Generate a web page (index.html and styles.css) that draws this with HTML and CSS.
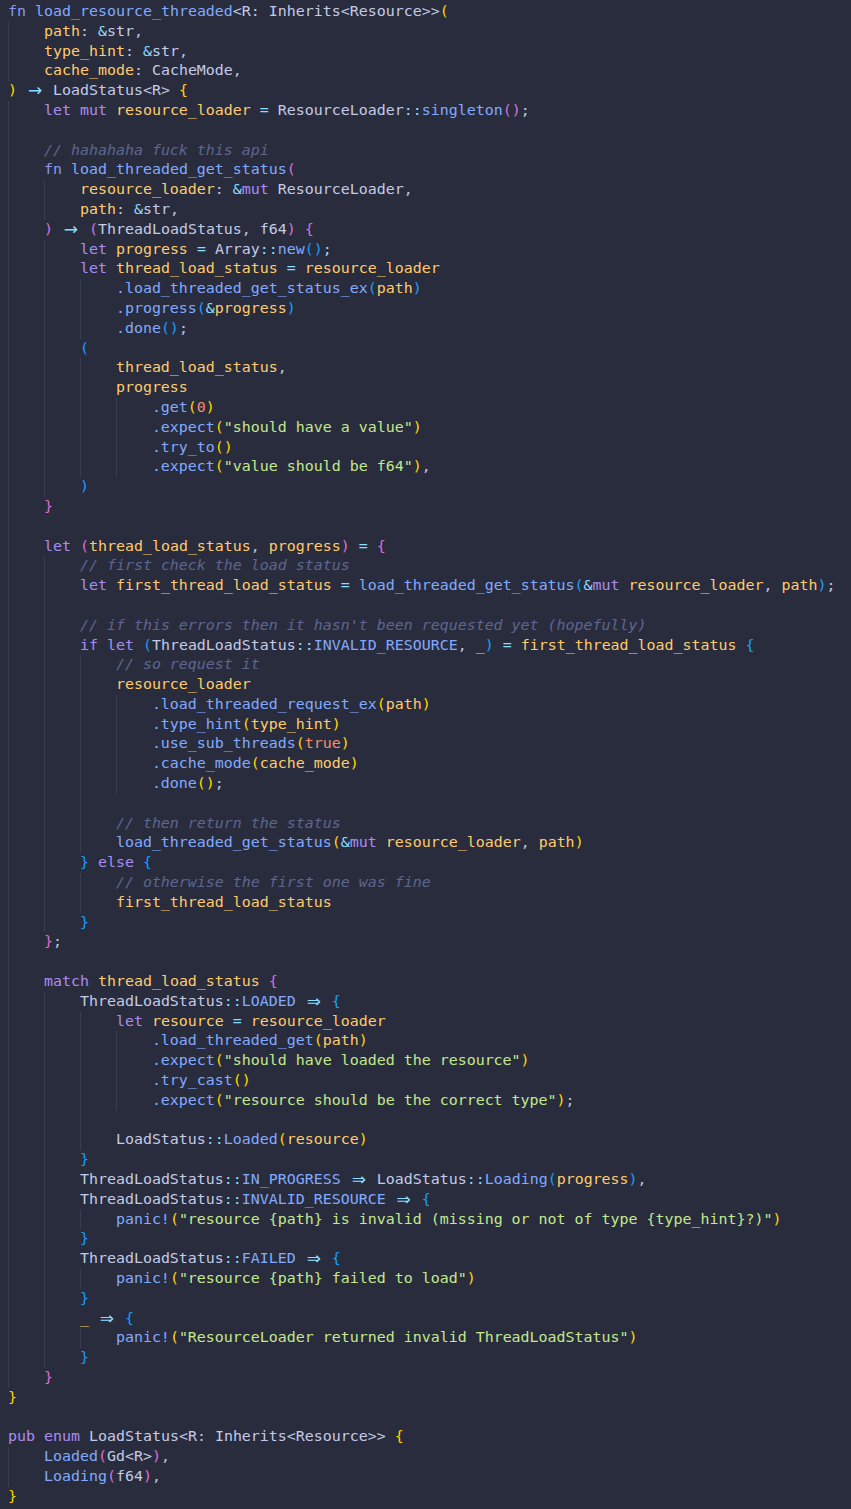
FILE: index.html
```html
<!DOCTYPE html>
<html>
<head>
    <title>load_resource_threaded</title>
    <link rel="stylesheet" href="styles.css">
</head>
<body>
<div class="code">
<div class="ln"><span class="fk">fn</span> <span class="f">load_resource_threaded</span>&lt;<span class="t">R</span>: <span class="t">Inherits</span>&lt;<span class="t">Resource</span>&gt;&gt;<span class="b1">(</span></div>
<div class="ln"><i></i><span class="v">path</span>: <span class="o">&amp;</span><span class="t">str</span>,</div>
<div class="ln"><i></i><span class="v">type_hint</span>: <span class="o">&amp;</span><span class="t">str</span>,</div>
<div class="ln"><i></i><span class="v">cache_mode</span>: <span class="t">CacheMode</span>,</div>
<div class="ln"><span class="b1">)</span> <span class="o lig">→</span> <span class="t">LoadStatus</span>&lt;<span class="t">R</span>&gt; <span class="b1">{</span></div>
<div class="ln"><i></i><span class="k">let mut</span> <span class="v">resource_loader</span> <span class="o">=</span> <span class="t">ResourceLoader</span><span class="o">::</span><span class="f">singleton</span><span class="b2">()</span>;</div>
<div class="ln"><i></i></div>
<div class="ln"><i></i><span class="c">// hahahaha fuck this api</span></div>
<div class="ln"><i></i><span class="fk">fn</span> <span class="f">load_threaded_get_status</span><span class="b2">(</span></div>
<div class="ln"><i></i><i></i><span class="v">resource_loader</span>: <span class="o">&amp;</span><span class="k">mut</span> <span class="t">ResourceLoader</span>,</div>
<div class="ln"><i></i><i></i><span class="v">path</span>: <span class="o">&amp;</span><span class="t">str</span>,</div>
<div class="ln"><i></i><span class="b2">)</span> <span class="o lig">→</span> <span class="b2">(</span><span class="t">ThreadLoadStatus</span>, <span class="t">f64</span><span class="b2">)</span> <span class="b2">{</span></div>
<div class="ln"><i></i><i></i><span class="k">let</span> <span class="v">progress</span> <span class="o">=</span> <span class="t">Array</span><span class="o">::</span><span class="f">new</span><span class="b3">()</span>;</div>
<div class="ln"><i></i><i></i><span class="k">let</span> <span class="v">thread_load_status</span> <span class="o">=</span> <span class="v">resource_loader</span></div>
<div class="ln"><i></i><i></i><i></i><span class="f">.load_threaded_get_status_ex</span><span class="b3">(</span><span class="v">path</span><span class="b3">)</span></div>
<div class="ln"><i></i><i></i><i></i><span class="f">.progress</span><span class="b3">(</span><span class="o">&amp;</span><span class="v">progress</span><span class="b3">)</span></div>
<div class="ln"><i></i><i></i><i></i><span class="f">.done</span><span class="b3">()</span>;</div>
<div class="ln"><i></i><i></i><span class="b3">(</span></div>
<div class="ln"><i></i><i></i><i></i><span class="v">thread_load_status</span>,</div>
<div class="ln"><i></i><i></i><i></i><span class="v">progress</span></div>
<div class="ln"><i></i><i></i><i></i><i></i><span class="f">.get</span><span class="b1">(</span><span class="n">0</span><span class="b1">)</span></div>
<div class="ln"><i></i><i></i><i></i><i></i><span class="f">.expect</span><span class="b1">(</span><span class="s">"should have a value"</span><span class="b1">)</span></div>
<div class="ln"><i></i><i></i><i></i><i></i><span class="f">.try_to</span><span class="b1">()</span></div>
<div class="ln"><i></i><i></i><i></i><i></i><span class="f">.expect</span><span class="b1">(</span><span class="s">"value should be f64"</span><span class="b1">)</span>,</div>
<div class="ln"><i></i><i></i><span class="b3">)</span></div>
<div class="ln"><i></i><span class="b2">}</span></div>
<div class="ln"><i></i></div>
<div class="ln"><i></i><span class="k">let</span> <span class="b2">(</span><span class="v">thread_load_status</span>, <span class="v">progress</span><span class="b2">)</span> <span class="o">=</span> <span class="b2">{</span></div>
<div class="ln"><i></i><i></i><span class="c">// first check the load status</span></div>
<div class="ln"><i></i><i></i><span class="k">let</span> <span class="v">first_thread_load_status</span> <span class="o">=</span> <span class="f">load_threaded_get_status</span><span class="b3">(</span><span class="o">&amp;</span><span class="k">mut</span> <span class="v">resource_loader</span>, <span class="v">path</span><span class="b3">)</span>;</div>
<div class="ln"><i></i><i></i></div>
<div class="ln"><i></i><i></i><span class="c">// if this errors then it hasn't been requested yet (hopefully)</span></div>
<div class="ln"><i></i><i></i><span class="k">if let</span> <span class="b3">(</span><span class="t">ThreadLoadStatus</span><span class="o">::</span><span class="e">INVALID_RESOURCE</span>, <span class="v">_</span><span class="b3">)</span> <span class="o">=</span> <span class="v">first_thread_load_status</span> <span class="b3">{</span></div>
<div class="ln"><i></i><i></i><i></i><span class="c">// so request it</span></div>
<div class="ln"><i></i><i></i><i></i><span class="v">resource_loader</span></div>
<div class="ln"><i></i><i></i><i></i><i></i><span class="f">.load_threaded_request_ex</span><span class="b1">(</span><span class="v">path</span><span class="b1">)</span></div>
<div class="ln"><i></i><i></i><i></i><i></i><span class="f">.type_hint</span><span class="b1">(</span><span class="v">type_hint</span><span class="b1">)</span></div>
<div class="ln"><i></i><i></i><i></i><i></i><span class="f">.use_sub_threads</span><span class="b1">(</span><span class="n">true</span><span class="b1">)</span></div>
<div class="ln"><i></i><i></i><i></i><i></i><span class="f">.cache_mode</span><span class="b1">(</span><span class="v">cache_mode</span><span class="b1">)</span></div>
<div class="ln"><i></i><i></i><i></i><i></i><span class="f">.done</span><span class="b1">()</span>;</div>
<div class="ln"><i></i><i></i><i></i></div>
<div class="ln"><i></i><i></i><i></i><span class="c">// then return the status</span></div>
<div class="ln"><i></i><i></i><i></i><span class="f">load_threaded_get_status</span><span class="b1">(</span><span class="o">&amp;</span><span class="k">mut</span> <span class="v">resource_loader</span>, <span class="v">path</span><span class="b1">)</span></div>
<div class="ln"><i></i><i></i><span class="b3">}</span> <span class="k">else</span> <span class="b3">{</span></div>
<div class="ln"><i></i><i></i><i></i><span class="c">// otherwise the first one was fine</span></div>
<div class="ln"><i></i><i></i><i></i><span class="v">first_thread_load_status</span></div>
<div class="ln"><i></i><i></i><span class="b3">}</span></div>
<div class="ln"><i></i><span class="b2">}</span>;</div>
<div class="ln"><i></i></div>
<div class="ln"><i></i><span class="k">match</span> <span class="v">thread_load_status</span> <span class="b2">{</span></div>
<div class="ln"><i></i><i></i><span class="t">ThreadLoadStatus</span><span class="o">::</span><span class="e">LOADED</span> <span class="o lig">⇒</span> <span class="b3">{</span></div>
<div class="ln"><i></i><i></i><i></i><span class="k">let</span> <span class="v">resource</span> <span class="o">=</span> <span class="v">resource_loader</span></div>
<div class="ln"><i></i><i></i><i></i><i></i><span class="f">.load_threaded_get</span><span class="b1">(</span><span class="v">path</span><span class="b1">)</span></div>
<div class="ln"><i></i><i></i><i></i><i></i><span class="f">.expect</span><span class="b1">(</span><span class="s">"should have loaded the resource"</span><span class="b1">)</span></div>
<div class="ln"><i></i><i></i><i></i><i></i><span class="f">.try_cast</span><span class="b1">()</span></div>
<div class="ln"><i></i><i></i><i></i><i></i><span class="f">.expect</span><span class="b1">(</span><span class="s">"resource should be the correct type"</span><span class="b1">)</span>;</div>
<div class="ln"><i></i><i></i><i></i></div>
<div class="ln"><i></i><i></i><i></i><span class="t">LoadStatus</span><span class="o">::</span><span class="e">Loaded</span><span class="b1">(</span><span class="v">resource</span><span class="b1">)</span></div>
<div class="ln"><i></i><i></i><span class="b3">}</span></div>
<div class="ln"><i></i><i></i><span class="t">ThreadLoadStatus</span><span class="o">::</span><span class="e">IN_PROGRESS</span> <span class="o lig">⇒</span> <span class="t">LoadStatus</span><span class="o">::</span><span class="e">Loading</span><span class="b3">(</span><span class="v">progress</span><span class="b3">)</span>,</div>
<div class="ln"><i></i><i></i><span class="t">ThreadLoadStatus</span><span class="o">::</span><span class="e">INVALID_RESOURCE</span> <span class="o lig">⇒</span> <span class="b3">{</span></div>
<div class="ln"><i></i><i></i><i></i><span class="f">panic!</span><span class="b1">(</span><span class="s">"resource {path} is invalid (missing or not of type {type_hint}?)"</span><span class="b1">)</span></div>
<div class="ln"><i></i><i></i><span class="b3">}</span></div>
<div class="ln"><i></i><i></i><span class="t">ThreadLoadStatus</span><span class="o">::</span><span class="e">FAILED</span> <span class="o lig">⇒</span> <span class="b3">{</span></div>
<div class="ln"><i></i><i></i><i></i><span class="f">panic!</span><span class="b1">(</span><span class="s">"resource {path} failed to load"</span><span class="b1">)</span></div>
<div class="ln"><i></i><i></i><span class="b3">}</span></div>
<div class="ln"><i></i><i></i><span class="v">_</span> <span class="o lig">⇒</span> <span class="b3">{</span></div>
<div class="ln"><i></i><i></i><i></i><span class="f">panic!</span><span class="b1">(</span><span class="s">"ResourceLoader returned invalid ThreadLoadStatus"</span><span class="b1">)</span></div>
<div class="ln"><i></i><i></i><span class="b3">}</span></div>
<div class="ln"><i></i><span class="b2">}</span></div>
<div class="ln"><span class="b1">}</span></div>
<div class="ln"></div>
<div class="ln"><span class="k">pub enum</span> <span class="t">LoadStatus</span>&lt;<span class="t">R</span>: <span class="t">Inherits</span>&lt;<span class="t">Resource</span>&gt;&gt; <span class="b1">{</span></div>
<div class="ln"><i></i><span class="e">Loaded</span><span class="b2">(</span><span class="t">Gd</span>&lt;<span class="t">R</span>&gt;<span class="b2">)</span>,</div>
<div class="ln"><i></i><span class="e">Loading</span><span class="b2">(</span><span class="t">f64</span><span class="b2">)</span>,</div>
<div class="ln"><span class="b1">}</span></div>
</div>
</body>
</html>
```

FILE: styles.css
```css
body {
    margin: 0;
    background: #292c3d;
    font-family: "DejaVu Sans Mono", "Liberation Mono", monospace;
    font-size: 14.95px;
    color: #bfc7e0;
}
.code {
    padding: 2px 0 0 8px;
}
.ln {
    height: 19.8px;
    line-height: 19.8px;
    white-space: pre;
}
.ln i {
    display: inline-block;
    width: 4ch;
    height: 19.8px;
    vertical-align: top;
    box-shadow: inset 1px 0 0 #393d52;
}
.lig {
    display: inline-block;
    width: 18px;
    height: 19.8px;
    line-height: 19.8px;
    vertical-align: top;
    font-family: "DejaVu Sans", sans-serif;
    font-size: 17px;
    text-align: center;
}
.k { color: #a98cf0; }
.fk { color: #8b98f2; }
.f { color: #82aaff; }
.e { color: #82aaff; }
.v { color: #ffcb6b; }
.t { color: #c3cbe8; }
.s { color: #c3e88d; }
.c { color: #5f668f; font-style: italic; }
.n { color: #f78c6c; }
.o { color: #89ddff; }
.b1 { color: #ffd700; }
.b2 { color: #da70d6; }
.b3 { color: #179fff; }
```
